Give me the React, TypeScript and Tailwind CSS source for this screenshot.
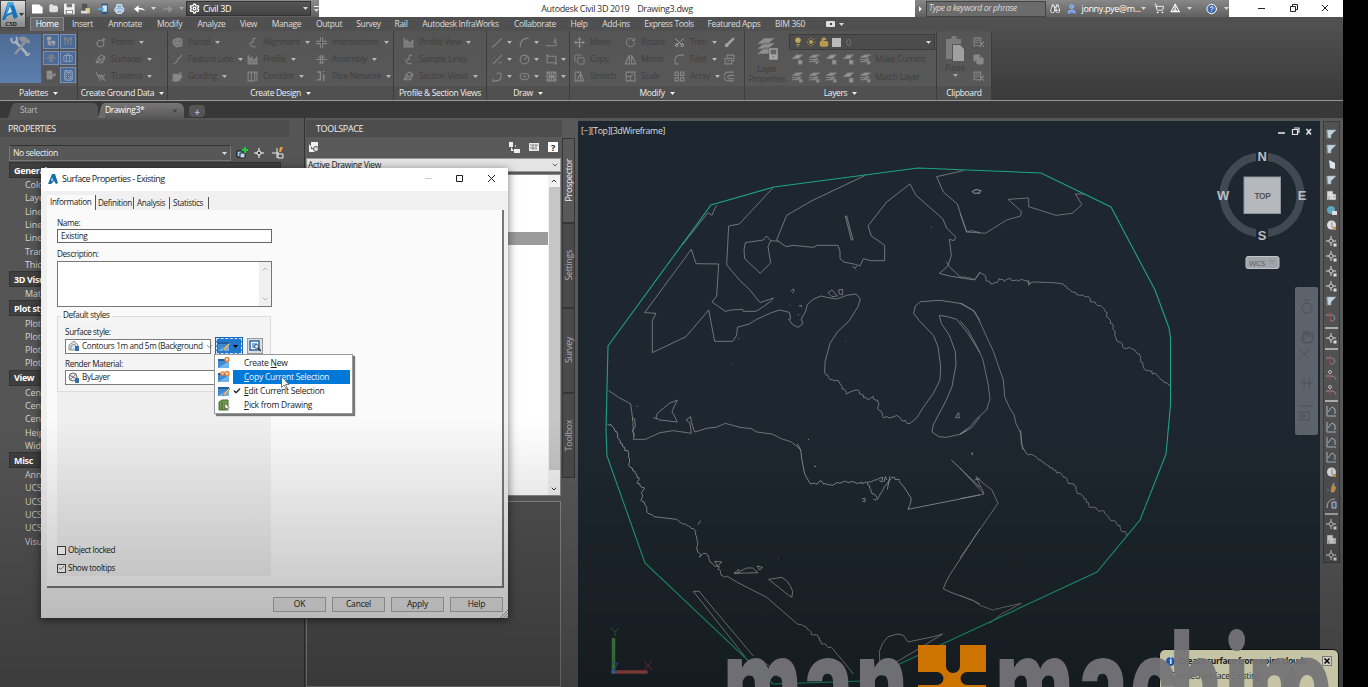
import React from "react";
import {
  Settings, Printer, Save, FolderOpen, File, User, ShoppingCart, Binoculars, CircleHelp, Lightbulb, Sun, LockOpen,
  Move, RotateCw, Scissors, Copy, Brush, Calculator, Briefcase, Check, ChevronDown, ChevronUp, Hand,
} from "lucide-react";

const Caret = ({ c = "fill-[#d8d8d8]" }: { c?: string }) => (
  <svg className={"h-[3px] w-[5px] shrink-0 " + c} viewBox="0 0 5 3"><path d="M0 0h5L2.5 3z" /></svg>
);

const tabs: [string, string][] = [
  ["Insert", "w-[37px]"], ["Annotate", "w-[48px]"], ["Modify", "w-[41px]"], ["Analyze", "w-[43px]"], ["View", "w-[31px]"],
  ["Manage", "w-[45px]"], ["Output", "w-[40px]"], ["Survey", "w-[39px]"], ["Rail", "w-[26px]"], ["Autodesk InfraWorks", "w-[93px]"],
  ["Collaborate", "w-[56px]"], ["Help", "w-[32px]"], ["Add-ins", "w-[42px]"], ["Express Tools", "w-[64px]"],
  ["Featured Apps", "w-[66px]"], ["BIM 360", "w-[46px]"],
];

const glyphs: Record<string, React.ReactNode> = {
  points: <><circle cx="5" cy="6" r="3" /><path d="M8 1v3M6.500 2.500h3M1 6h1" /></>,
  surf: <path d="M1 8 3 3l3-2 3 2-2 5zM3 3l4 5M1 8l8-5" />,
  trav: <path d="M1 1l3 6 2-3 3 5M5 9l4-6M2 4h4" />,
  parcel: <path d="M1 3l4-2 4 1v6l-5 1-3-3zM5 1v5M1 6h7" fill="#777" />,
  feature: <path d="M1 9c3-1 4-2 4-4M5 5l4-4M1 2h1" />,
  grading: <path d="M1 3h6l2 2-3 4H1zM7 1l2 2" fill="#888" />,
  align: <path d="M8 1c-5 0 0 4-4 4-2 0-2 4 4 4" />,
  profile: <path d="M1 1v8h8V3L6 6 4 3 3 6z" fill="#777" />,
  corridor: <path d="M1 1h6v8H1zM4 1v8M7 3l2-2v8" />,
  inter: <path d="M4 0v4H0M6 0v4h4M0 6h4v4M10 6H6v4" />,
  assembly: <path d="M0 5h10M2 3h6M4 1v8M6 1v8M3 8h4" />,
  pipe: <path d="M1 1h3v7H1M7 3v6M7 0v1" strokeWidth="1.4" />,
  line: <path d="M1 9 9 1M0 8v1h1" />,
  arc: <path d="M1 9C1 4 4 1 9 1M1 9h.5" />,
  pline: <path d="M0 8h8c2 0 2-4-1-3l2-2M8 1l1 2-2 1" />,
  ray: <path d="M1 9 9 1M2 3h.5M6 8h3" />,
  circle: <><circle cx="5" cy="5" r="4" /><path d="M5 5l3-3" /></>,
  rect: <path d="M1 2h8v6H1zM0 1h2M8 9h2" />,
  spline: <path d="M1 9h3c4 0 5-4 4-7H4M1 7v3" />,
  ellipse: <><ellipse cx="5" cy="5" rx="4" ry="3" /><circle cx="5" cy="5" r=".5" /></>,
  hatch: <path d="M1 1h8v8H1zM1 5h8M5 1v8M1 1l8 8M9 1 1 9M3 1v8M7 1v8" />,
  mirror: <path d="M4 1v8H0zM6 1v8h4z" />,
  scale: <path d="M1 1h8v8H1zM1 5h4v4M5 5l2-2" />,
  stretch: <path d="M1 1h5v8H1zM3 8 6 2l3 7H3" />,
  fillet: <path d="M1 9V5c0-2 2-4 4-4h4M1 9h3" />,
  array: <path d="M1 1h3v3H1zM6 1h3v3H6zM1 6h3v3H1zM6 6h3v3H6z" />,
  offset: <path d="M9 1H4a4 4 0 0 0 0 8h5M9 4H5a1 1 0 0 0 0 3h4" />,
  cube: <path d="M1 4h6v5H1zM3 3V1h6v5H7M3 6h2" />,
  layer: <path d="M1 4 4 1h5L6 4zM6 6h3v3H6zM7 5v1" fill="#999" />,
  layers2: <path d="M1 3 4 1h5L6 3zM0 5h5l3-1M0 7h5l3-2M6 8l1 1 2-3" fill="#999" />,
  layers3: <path d="M1 3 4 1h5L6 3zM0 5h5l3-1M0 7h5l3-2M7 7h2v2H7z" fill="#999" />,
  tree: <path d="M1 1h4v3H1zM2 4v5h7M5 5h4v4H5zM3 7h2" fill="#a9b5c7" />,
  pens: <path d="M2 1v8M5 3v6M8 1v8M1 1l1 3 2-3M4 2l1 3 2-3M7 1l1 3 1-3" />,
  sheet: <path d="M1 1h5v8H1zM1 4h5M1 6h5M3 1v8M6 6l3-3v3z" fill="#999" />,
  cut: <path d="M1 1h6v7H1zM2 3h4M2 5h3M6 4l4 5M10 4 6 9" />,
};
const G = ({ n, s = "size-[11px]" }: { n: string; s?: string }) => (
  <svg viewBox="0 0 10 10" className={s + " shrink-0 fill-none stroke-[#858585]"} strokeWidth="1">{glyphs[n]}</svg>
);

const Cmd = ({ n, icon, label, caret }: { n?: string; icon?: React.ReactNode; label: string; caret?: boolean }) => (
  <div className="flex h-[17px] items-center gap-[5px] whitespace-nowrap text-[#404040]">
    {n ? <G n={n} /> : icon}
    <span className="text-[8.500px]">{label}</span>
    {caret && <Caret c="fill-[#b8b8b8]" />}
  </div>
);

const Panel = ({ label, w, caret, children }: { label: string; w: string; caret?: boolean; children: React.ReactNode }) => (
  <section className={"flex h-full shrink-0 flex-col border-r border-[#3d3d3d] bg-gradient-to-b from-[#555] to-[#595959] " + w}>
    <div className="flex h-[55px] pt-[3px]">{children}</div>
    <div className="flex h-[14px] items-center justify-center gap-[5px] bg-[#505050] text-[8.500px] whitespace-nowrap text-[#efefef]">
      {label}{caret && <Caret c="fill-[#eee]" />}
    </div>
  </section>
);

const Ribbon = () => (
  <div className="flex h-[70px] border-b border-[#999] bg-gradient-to-b from-[#4e4e4e] to-[#3a3a3a]">
    <Panel label="Palettes" w="w-[78px]" caret>
      <div className="flex h-[49px] w-[41px] items-start justify-center bg-gradient-to-b from-[#4d6b94] to-[#5c7fae] pt-[2px]">
        <svg viewBox="0 0 22 20" className="h-[20px] w-[22px] fill-none stroke-[#a9b0b8]">
          <path d="M5 5 17 18" strokeWidth="2.600" /><path d="M2 2c-2 3 1 6 4 4 2-1 1-4 0-5" strokeWidth="2" /><path d="M16 18c0 2 4 1 3-1" strokeWidth="2" />
          <path d="M15 6 5 18" strokeWidth="2.600" stroke="#8f949a" /><path d="M9 2c4-2 8-1 11 4l-2 1-3-2-3 1z" fill="#8f949a" stroke="#8f949a" />
        </svg>
      </div>
      <div className="ml-[2px] grid h-[49px] grid-cols-2 gap-x-px gap-y-[2px]">
        {["tree", "pens", "assembly", "x", "sheet", "y"].map((n, i) => (
          <div key={i} className={"flex w-[16px] items-center justify-center " + (i === 4 ? "bg-[#555]" : "border border-[#7890b4] bg-[#4c6a97]")}>
            {n === "x" ? <Briefcase className="size-[10px] text-[#98a6bb]" /> : n === "y" ? <Calculator className="size-[11px] text-[#a8b6ca]" /> : <G n={n} s="size-[10px]" />}
          </div>
        ))}
      </div>
    </Panel>
    <Panel label="Create Ground Data" w="w-[90px]" caret>
      <div className="pl-[17px]"><Cmd n="points" label="Points" caret /><Cmd n="surf" label="Surfaces" caret /><Cmd n="trav" label="Traverse" caret /></div>
    </Panel>
    <Panel label="Create Design" w="w-[226px]" caret>
      <div className="w-[79px] pl-[4px]"><Cmd n="parcel" label="Parcel" caret /><Cmd n="feature" label="Feature Line" caret /><Cmd n="grading" label="Grading" caret /></div>
      <div className="w-[69px]"><Cmd n="align" label="Alignment" caret /><Cmd n="profile" label="Profile" caret /><Cmd n="corridor" label="Corridor" caret /></div>
      <div><Cmd n="inter" label="Intersections" caret /><Cmd n="assembly" label="Assembly" caret /><Cmd n="pipe" label="Pipe Network" caret /></div>
    </Panel>
    <Panel label="Profile & Section Views" w="w-[93px]">
      <div className="pl-[9px]"><Cmd n="profile" label="Profile View" caret /><Cmd n="align" label="Sample Lines" /><Cmd n="surf" label="Section Views" caret /></div>
    </Panel>
    <Panel label="Draw" w="w-[83px]" caret>
      <div className="grid h-[51px] grid-cols-3 gap-x-[7px] pl-[5px]">
        {["line", "arc", "pline", "ray", "circle", "rect", "spline", "ellipse", "hatch"].map((n, i) => (
          <div key={n} className="flex items-center gap-[4px]"><G n={n} />{i !== 2 && <Caret c="fill-[#b8b8b8]" />}</div>
        ))}
      </div>
    </Panel>
    <Panel label="Modify" w="w-[175px]" caret>
      <div className="w-[51px] pl-[4px]">
        <Cmd icon={<Move className="size-[11px] text-[#999]" />} label="Move" /><Cmd icon={<Copy className="size-[11px] text-[#888]" />} label="Copy" /><Cmd n="stretch" label="Stretch" />
      </div>
      <div className="w-[49px] pl-[4px]">
        <Cmd icon={<RotateCw className="size-[11px] text-[#888]" />} label="Rotate" /><Cmd n="mirror" label="Mirror" /><Cmd n="scale" label="Scale" />
      </div>
      <div className="w-[54px] pl-[4px]">
        <Cmd icon={<Scissors className="size-[11px] -rotate-90 text-[#aaa]" />} label="Trim" caret /><Cmd n="fillet" label="Fillet" caret /><Cmd n="array" label="Array" caret />
      </div>
      <div className="flex h-[51px] flex-col justify-around"><Brush className="size-[11px] fill-[#aaa] text-[#999]" /><G n="cube" /><G n="offset" /></div>
    </Panel>
    <Panel label="Layers" w="w-[192px]" caret>
      <div className="flex w-[44px] flex-col items-center pt-[2px] text-[8.500px] leading-[10px] text-[#404040]">
        <svg viewBox="0 0 24 24" className="mb-[4px] size-[24px] fill-[#8f8f8f] stroke-[#5a5a5a]" strokeWidth=".6">
          <path d="M2 18 9 12h11l-7 6zM2 13l7-6h11l-7 6zM2 8l7-6h11l-7 6z" /><path d="M14 12h9v12h-9z" fill="#a5a5a5" /><path d="M16 14h5v4h-5zM17 21h3" fill="#666" />
        </svg>
        <span>Layer</span><span>Properties</span>
      </div>
      <div>
        <div className="flex h-[16px] w-[146px] items-center gap-[3px] border border-[#3c3c3c] bg-[#4c4c4c] pl-[3px]">
          <Lightbulb className="size-[10px] fill-[#c0aa60] text-[#b9a45c]" /><Sun className="size-[10px] fill-[#b19b50] text-[#b19b50]" />
          <LockOpen className="size-[10px] fill-[#b8974e] text-[#c7a45a]" /><span className="size-[9px] bg-[#bbb]" />
          <span className="ml-[2px] text-[9px] text-[#777]">0</span><span className="mr-[3px] ml-auto"><Caret /></span>
        </div>
        {["Make Current", "Match Layer"].map((t, i) => (
          <div key={t} className="flex h-[18px] items-center gap-[6px] pl-[3px] text-[8.500px] text-[#404040]">
            {["layer", "layers2", "layer", "layer", "layers3"].map((k, j) => <G key={j} n={i && j !== 3 ? "layers3" : k} />)}<span className="-ml-[2px] whitespace-nowrap">{t}</span>
          </div>
        ))}
      </div>
    </Panel>
    <Panel label="Clipboard" w="w-[55px]">
      <div className="flex w-[36px] flex-col items-center pt-[2px] text-[8.500px] text-[#404040]">
        <svg viewBox="0 0 19 25" className="h-[25px] w-[19px]"><path d="M0 3h5l1-3h4l1 3h4v5H6v15H0z" fill="#7c7c7c" /><path d="M7 9h7l4 4v12H7z" fill="#a0a0a0" /></svg>
        <span className="leading-[13px]">Paste</span><Caret c="fill-[#aaa]" />
      </div>
      <div className="flex h-[51px] flex-col justify-around"><G n="cut" /><Copy className="size-[11px] fill-[#888] text-[#888]" /><G n="cut" /></div>
    </Panel>
  </div>
);

const TitleBar = () => (
  <header className="flex h-[17px] shrink-0 items-center bg-white">
    <div className="flex h-full w-[319px] items-center gap-[6px] bg-gradient-to-b from-[#8d8d8d] to-[#5f5f5f] pl-[32px]">
      <svg viewBox="0 0 12 10" className="h-[10px] w-[12px] fill-white"><path d="M0 0h8l4 3v7H0z" /></svg>
      <FolderOpen className="size-[11px] fill-[#ddd] text-[#eee]" />
      <svg viewBox="0 0 12 12" className="size-[12px]"><path d="M0 0h12v12H0z" fill="#eee" /><path d="M3 0h6v4H3zM2 7h8v5H2z" fill="#777" /><path d="M3 8h6v3H3z" fill="#fff" /></svg>
      <svg viewBox="0 0 12 12" className="size-[12px]"><path d="M1 0h6v9H1z" fill="#555" /><path d="M5 5h5v6H5z" fill="#d9cf8e" /><path d="M0 8h7v3H0z" fill="#ddd" /></svg>
      <svg viewBox="0 0 12 12" className="size-[12px]"><path d="M4 0h7v12H4z" fill="#335a7c" /><path d="M5 2h5v7H5z" fill="#cfe6f8" /><path d="M0 5h4V3l3 3-3 3V7H0z" fill="#58a6dd" /></svg>
      <Printer className="size-[12px] fill-[#8bb4d4] text-[#e6f2ff]" />
      <svg viewBox="0 0 12 8" className="ml-[3px] h-[8px] w-[11px] shrink-0 fill-white"><path d="M0 4 5 0v2.500c4 0 6 1 7 3.500-2-1-4-1.500-7-1.500V8z" /></svg><Caret />
      <svg viewBox="0 0 12 8" className="h-[8px] w-[11px] shrink-0 fill-[#929292]"><path d="M12 4 7 0v2.500C3 2.500 1 3.500 0 6c2-1 4-1.500 7-1.500V8z" /></svg>
      <Caret c="fill-[#aaa]" />
      <div className="-ml-[4px] flex h-[15px] w-[125px] shrink-0 items-center gap-[3px] border border-[#333] bg-gradient-to-b from-[#555] to-[#434343] px-[2px] text-[9px] text-white">
        <Settings className="size-[11px]" strokeWidth={3} />Civil 3D<span className="ml-auto"><Caret /></span>
      </div>
      <span className="-ml-[3px] flex flex-col gap-[2px]"><i className="h-px w-[5px] bg-white" /><Caret /></span>
    </div>
    <div className="flex w-[596px] justify-center text-[9px] whitespace-pre text-[#333]">Autodesk Civil 3D 2019    Drawing3.dwg</div>
    <div className="flex h-full w-[314px] items-center bg-gradient-to-b from-[#888] to-[#606060]">
      <svg viewBox="0 0 3 6" className="mx-[4px] h-[6px] w-[3px] fill-white"><path d="M0 0l3 3-3 3z" /></svg>
      <div className="flex h-[16px] w-[126px] items-center border border-[#444] bg-[#6b6b6b] pl-[2px] text-[8.500px] text-[#ddd] italic">Type a keyword or phrase</div>
      <Binoculars className="mx-[4px] size-[11px] fill-[#555] text-white" />
      <User className="mr-[4px] ml-[2px] size-[12px] fill-[#6f97e8] text-[#a3c0ff]" />
      <span className="w-[60px] text-[9px] whitespace-nowrap text-white">jonny.pye@m...</span>
      <Caret /><ShoppingCart className="ml-[8px] size-[11px] text-white" />
      <svg viewBox="0 0 10 10" className="mx-[6px] size-[11px] fill-none stroke-white"><path d="M5 1 1 8h8zM5 3v3M3 8l2-2 2 2" /></svg>
      <Caret /><CircleHelp className="mr-[7px] ml-[14px] size-[12px] fill-[#456bb5] text-white" /><Caret />
    </div>
    <svg viewBox="0 0 114 17" className="h-[17px] w-[114px] fill-none stroke-[#222]">
      <path d="M29 8.500h7M61.500 6.500h5v5h-5zM63.500 6.500v-2h5v5h-2M93 5l6 6M99 5l-6 6" />
    </svg>
  </header>
);

const props: [string, string[]][] = [
  ["General", ["Color", "Layer", "Linetype", "Linetype scale", "Lineweight", "Transparency", "Thickness"]],
  ["3D Visualization", ["Material"]],
  ["Plot style", ["Plot style", "Plot style table", "Plot table", "Plot table type"]],
  ["View", ["Center X", "Center Y", "Center Z", "Height", "Width"]],
  ["Misc", ["Annotation", "UCS icon", "UCS icon", "UCS per", "UCS Name", "Visual Style"]],
];

const Properties = () => (
  <aside className="flex w-[305px] shrink-0 flex-col border-r border-[#333] bg-[#555]">
    <div className="mt-[2px] flex h-[17px] w-[289px] items-center bg-[#4d4d4d] pl-[8px] text-[9px] text-[#eee]">PROPERTIES</div>
    <div className="mt-[8px] flex h-[16px] items-center gap-[5px] pl-[9px]">
      <div className="flex h-[16px] w-[222px] items-center justify-between border border-[#777] border-t-[#333] bg-[#575757] px-[3px] text-[8.500px] text-[#eee]">No selection<Caret /></div>
      <svg viewBox="0 0 12 12" className="size-[12px]"><path d="M1 4h6v6H1z" fill="#9cc6ef" stroke="#111" /><path d="M4 6h5v5H4z" fill="#bfd9f5" stroke="#222" /><path d="M9 0v6M6 3h6" stroke="#1fd03c" strokeWidth="2" /></svg>
      <svg viewBox="0 0 12 12" className="size-[12px] fill-[#333] stroke-white"><path d="M6 1v10M1 6h10" /><circle cx="6" cy="6" r="2" /></svg>
      <svg viewBox="0 0 12 12" className="ml-[2px] size-[12px]"><path d="M5 1v10M0 6h7M6 7h5v4H6z" stroke="#eee" fill="#555" /><path d="M8 0h3L9 5H7z" fill="#f0982e" /></svg>
    </div>
    <div className="mt-px ml-[9px] w-[272px]">
      {props.map(([h, rows]) => (
        <div key={h}>
          <div className="flex h-[16px] items-center border border-[#333] bg-[#3f3f3f] pl-[4px] text-[9px] font-bold text-white">{h}</div>
          {rows.map((r, i) => <div key={i} className="flex h-[13.300px] items-center pl-[16px] text-[9px] tracking-[-0.1px] text-[#d5d5d5]">{r}</div>)}
        </div>
      ))}
    </div>
  </aside>
);

const Toolspace = () => (
  <aside className="flex w-[273px] shrink-0 bg-[#595959]">
    <div className="flex w-[257px] flex-col pl-px">
      <div className="mt-[2px] flex h-[17px] items-center bg-[#4d4d4d] pl-[10px] text-[9px] text-[#eee]">TOOLSPACE</div>
      <div className="flex h-[21px] items-center gap-[9px] pr-[4px] pb-px pl-[3px]">
        <svg viewBox="0 0 10 10" className="mr-auto size-[10px]"><path d="M2 0h7v7H2zM0 2v8h7" fill="#eee" /><circle cx="7" cy="7" r="2.500" fill="#ddd" stroke="#555" /></svg>
        <svg viewBox="0 0 11 11" className="size-[11px] fill-[#eee]"><path d="M0 0h4v5H0zM2 5v4h3M5 7h6v4H5zM6 3h1v3" /></svg>
        <svg viewBox="0 0 10 10" className="size-[10px]"><path d="M0 1h10v8H0z" fill="#e8e8e8" /><path d="M1 3h8M4 3v5M7 3v5M1 6h5" stroke="#888" /></svg>
        <span className="flex size-[10px] items-center justify-center bg-white text-[9px] font-bold text-[#222]">?</span>
      </div>
      <div className="flex h-[14px] w-[255px] items-center justify-between border border-[#999] bg-[#e4e4e4] px-px text-[8.500px] text-[#222]">Active Drawing View<ChevronDown className="size-[8px]" /></div>
      <div className="mt-[2px] flex h-[322px] w-[255px] flex-col border border-[#888] bg-white">
        <div className="flex h-full">
          <div className="flex-1 pt-[57px]"><div className="h-[13px] bg-[#9b9b9b]" /></div>
          <div className="flex w-[12px] flex-col items-center justify-between bg-[#f1f1f1] py-[2px]">
            <ChevronUp className="size-[8px] text-[#333]" strokeWidth={3} /><div className="mt-[2px] h-[283px] w-[11px] bg-[#c6c6c6]" /><ChevronDown className="mt-auto size-[8px] text-[#333]" strokeWidth={3} />
          </div>
        </div>
      </div>
      <div className="mt-[5px] w-[255px] flex-1 border border-[#888] bg-[#515151]" />
    </div>
    <nav className="flex w-[14px] flex-col pt-[20px]">
      {["Prospector", "Settings", "Survey", "Toolbox"].map((t, i) => (
        <div key={t} className={"flex h-[85px] w-[13px] items-center justify-center border border-[#353535] text-[9px] [writing-mode:vertical-rl] " + (i ? "bg-[#4a4a4a] text-[#aaa]" : "bg-[#595959] text-[#eee]")}>
          <span className="rotate-180">{t}</span>
        </div>
      ))}
    </nav>
  </aside>
);

// A leading "~" marks a contour that is drawn with small irregular steps.
const contoursA = [
  "580,112 478,222 446,228 440,345 480,392 508,418 540,458 580,444 572,454 550,470 528,484 490,484 488,478 452,480 436,484 416,470 396,456 410,438 416,342 348,341 334,298 194,488 228,490 217,512 217,608 318,560 386,480 404,574 458,574 470,556 472,532 508,522 530,508 574,488 600,480 628,487 632,506 626,508 638,524 654,532 668,522 664,506 676,486 682,464 700,448 722,438 740,442 770,447 800,436 828,432 841,447 834,470 808,512 772,546 750,580 735,636 734,668",
  "~734,668 750,688 778,696 786,716 800,732 820,722 838,724 850,742 864,748 880,740 894,758 896,780 908,800 930,804 950,796 964,810 990,820",
  "990,820 1010,804 1030,772 1060,730 1080,690 1082,650 1074,590 1060,556 1018,512 1001,490 1006,468 1022,455 1080,451 1146,461 1180,482 1200,512",
  "856,76 694,153 620,196 590,270 618,290 640,286 700,292 712,286 774,286 780,304 780,326 792,336 826,343 840,348 850,326 872,332 914,332 914,286 906,280 874,258 864,228 920,156 990,102 1008,136 1088,206 1100,234 1128,262 1122,272 1108,268 1114,316 1104,348 1078,370 1108,378 1184,390 1200,368",
  "496,278 550,270 560,258 572,272 564,290 572,338 541,370 494,326 492,300 496,278", "572,272 596,274",
  "796,198 800,198 819,270 814,270 796,198", "818,348 825,356 830,348",
  "384,188 396,196 404,176 412,166", "384,188 306,286",
  "1150,62 1070,80 1090,126 1132,162 1160,246 1174,242 1200,248",
  "1176,125 1190,119 1200,122 1200,130 1184,130 1176,125",
  "744,428 756,420 772,438 756,440 744,428", "776,420 788,418 788,434 778,432 776,420", "632,424 640,417 643,424 636,430",
  "656,468 664,466 664,472", "630,464 632,466", "654,492 656,496", "1200,608 1162,548 1130,508 1102,500 1078,496 1084,520 1108,556 1126,604 1128,644 1116,710 1096,756 1060,824 1056,846 1076,860 1100,862 1144,852 1176,832 1200,800",
  "1126,802 1136,788 1138,804 1126,802", "86,722 116,742 152,762 158,806", "~158,806 160,868", "160,868 196,868 240,848 280,842 334,850 330,820 318,810 332,800 334,816 344,846 384,834 408,832 436,820 480,832 514,836 530,846 576,852 604,866 634,876 652,890 662,900",
  "292,750 268,760 232,790 228,802 238,810 292,816 276,784 292,750", "220,802 232,808", "156,806 164,806 166,830 158,840 162,860",
  "796,574 798,574", "474,566 478,566", "455,640 457,640", "684,867 686,868", "1053,231 1056,233", "170,768 174,770",
];
const contoursB = [
  "0,190 20,246 76,250 140,210 182,198 184,184 144,148 206,144 206,170 288,196 336,190 366,164 346,132 372,132",
  "36,124 48,118 64,122 58,128 42,130 36,124", "-42,334 -30,352 0,380",
  "~0,380 44,388 60,366 72,374 78,392 92,402 112,398 116,386 132,394 150,384 162,392 188,388 204,398 220,396",
  "220,396 280,398 310,402", "~310,402 322,416 350,434 380,440 398,456 434,480 444,502 460,528 466,560 488,590 520,598 538,612 542,636 562,662 590,674 610,692 630,706",
  "0,460 44,484 68,534 100,604 130,690 134,740 148,772 162,794 168,820 182,850 188,900",
  "0,512 24,540 46,580 68,626 84,700 90,746 80,780 50,806 30,830 0,852", "206,390 206,406 214,398",
];
const contoursC = [
  "~82,72 96,78 112,102 112,112 128,140 146,158 146,196 158,212 178,234 172,250 186,262 194,264 184,280 186,304 198,318 204,340 222,350", "222,350 290,358 302,368",
  "~302,368 320,376 344,390 350,420 352,456 362,462 358,472 370,460 382,466 390,486 400,494 418,500 414,508 422,518 434,532 444,530",
  "444,530 470,546 560,592 650,670", "~650,670 680,682 694,704 714,706 718,722 730,732 764,754", "764,754 788,782 820,822",
  "404,484 426,486 412,498 404,484", "354,374 362,362", "462,520 476,508 478,518 462,520 534,518 518,504 500,504 480,514", "532,498 548,502 538,510 532,498",
  "566,538 606,532 622,544 632,560 638,574 636,592 626,586 566,538",
  "662,150 666,180 674,222 690,250", "~690,250 712,252 720,242 730,252 756,256 776,248 800,246 830,250 862,248 880,242 900,234", "652,132 662,150", "~862,248 874,276 892,298 912,262 936,232 960,240",
  "900,234 908,232 906,246 898,242", "912,246 916,230 920,240", "930,228 922,268", "880,298 890,300",
  "956,242 974,264 994,296 990,314 984,328 1200,285", "846,298 854,294 856,304 848,304", "1114,180 1200,262", "1174,160 1178,162", "702,198 708,200", "684,117 686,119", "595,475 596,477",
  "340,574 358,574 380,602 520,768", "340,574 495,770",
  "560,790 590,826 612,836 614,850", "900,800 898,754 908,730 924,710 954,702 970,706 980,720 984,726 1060,710 1088,702 1020,744 960,780 906,806 906,796",
  "1200,386 1110,524 1098,546 1090,566 1110,576 1180,602 1200,612", "1184,240 1200,236",
];
const contoursD = [
  "0,114 72,192 0,206", "72,190 48,140 72,162 96,180 114,220 0,384", "0,496 40,512 60,526 98,540 130,532 184,520 128,550 88,580",
  "182,0 184,44 200,72", "~200,72 220,76 246,96 280,120 304,132 322,154 344,168 350,184 370,200 386,226 412,240 426,242 446,262 470,280 500,316", "36,66 38,76", "0,12 20,0",
];

const roughen = (s: string) => {
  if (s[0] !== "~") return s;
  const pts = s.slice(1).split(" ").map((p) => p.split(",").map(Number));
  const out: string[] = [];
  let k = 1;
  for (let i = 0; i < pts.length - 1; i++) {
    const [x, y] = pts[i], [u, v] = pts[i + 1];
    const n = Math.max(1, Math.round(Math.hypot(u - x, v - y) / 6));
    for (let j = 0; j < n; j++) {
      k = (k * 73 + 41) % 997;
      const d = j ? ((k % 7) - 3) * 0.9 : 0;
      out.push(`${x + ((u - x) * j) / n + d},${y + ((v - y) * j) / n - d}`);
    }
  }
  out.push(pts[pts.length - 1].join(","));
  return out.join(" ");
};

const Lines = ({ items, at, c }: { items: string[]; at: string; c: string }) => (
  <g transform={at + " scale(.33333)"} fill="none" strokeWidth="2.200" className={c}>
    {items.map((p, i) => <polyline key={i} points={roughen(p)} />)}
  </g>
);

const Drawing = () => (
  <svg viewBox="578 121 742 566" className="h-[566px] w-[742px] bg-[#1e272f]" fontFamily="Open Sans, sans-serif">
    <text x="581" y="134" fontSize="8.500" fill="#ddd" textLength="84" lengthAdjust="spacingAndGlyphs">[−][Top][3dWireframe]</text>
    <Lines items={contoursA} at="translate(580 150)" c="stroke-[#8d9196]" />
    <Lines items={contoursB} at="translate(960 150)" c="stroke-[#858a8f]" />
    <Lines items={contoursC} at="translate(580 400)" c="stroke-[#a6abaf]" />
    <Lines items={contoursD} at="translate(960 430)" c="stroke-[#8a8f94]" />
    <path d="M608 346 711 205 774 187 918 168 1041 173 1111 207 1155 290 1169 328 1170.500 338V405L1166 454 1140 520 1097 572 863 681 773 684 645 563 607 456 606 430z" fill="none" stroke="#1fa384" strokeWidth="1.100" />
    <g stroke="#dfe3e6" fill="none" strokeWidth="1.600"><path d="M1278 133h7" /><path d="M1292.500 129.500h5v5h-5zM1294 128h5v5" strokeWidth="1.200" /><path d="M1306.500 129l4.500 5.500M1311 129l-4.500 5.500" /></g>
    <circle cx="1262" cy="195" r="38.500" fill="none" stroke="#414952" strokeWidth="8" />
    <g fontFamily="Liberation Sans, sans-serif" fontWeight="bold" fontSize="13" fill="#b9bec4" textAnchor="middle">
      <path d="M1256 150h12v12h-12zM1256 229h12v12h-12z" fill="#1e272f" />
      <text x="1262" y="161">N</text><text x="1262" y="240">S</text><text x="1223" y="200">W</text><text x="1302" y="200">E</text>
      <rect x="1244" y="177" width="36.500" height="36.500" fill="#b5b9be" stroke="#8e949a" />
      <text x="1262.500" y="198.500" fontSize="9" fill="#4f555b" textLength="16" lengthAdjust="spacingAndGlyphs">TOP</text>
    </g>
    <rect x="1246" y="256.500" width="33" height="12" rx="2" fill="#9fa5aa" stroke="#c0c5c9" />
    <text x="1249" y="265.500" fontSize="8" fill="#555d64">WCS</text><path d="M1269 260.500h6l-3 3z" fill="none" stroke="#8b9197" />
    <rect x="1295" y="287" width="23" height="148" rx="2" fill="#5c636a" />
    <g fill="none" stroke="#4b5259"><circle cx="1307" cy="308" r="5" /><path d="M1304 300h6M1299 349l10 10M1299 359l11-10M1300 383h13M1304 377v12M1309 377v12M1299 412h10v8h-10zM1299 406h14M1302 414l4 2-4 2z" /></g>
    <Hand x="1300" y="330" width="14" height="14" color="#4b5259" />
    <g strokeWidth="3.500"><path d="M613.500 638v34" stroke="#4d8a47" /><path d="M613 672h34.500" stroke="#a84e4e" /></g>
    <path d="M611 628l4 4 4-4M615 632v4" stroke="#2f6b2f" fill="none" /><path d="M644 661l8 9M652 661l-8 9" stroke="#8c3438" /><path d="M612 663h6l-5 8h5" stroke="#2c64a8" fill="none" /><circle cx="613" cy="672" r="2" fill="#3d7fc0" />
  </svg>
);

const railKinds = "flag flag page flag doc globe ball pt pt pt pt flag arc | pt | arc arc2 arc2 | dim dim dim dim ball bolt curve | pt doc pt".split(" ");
const railArt: Record<string, React.ReactNode> = {
  flag: <path d="M1 1h9L5 6v3H2zM1 1v9" fill="#c6d2e0" stroke="#8aa" strokeWidth=".6" />,
  page: <path d="M3 1l6 3v6L4 9z" fill="#dfe6ee" />,
  doc: <path d="M1 1h6v3h3v6H1zM3 6v4M7 7h2" fill="#ddd" stroke="#666" strokeWidth=".5" />,
  globe: <><circle cx="5" cy="5" r="4" fill="#5aa9bb" /><path d="M6 6h5v4H6z" fill="#ddd" /></>,
  ball: <><circle cx="5.500" cy="5" r="4.500" fill="#ddd" /><path d="M6 2v6" stroke="#888" /><path d="M7 7h3v3H7z" fill="#d98a33" /></>,
  pt: <><path d="M5 0v3M5 7v3M0 5h3M7 5h3" stroke="#ddd" /><path d="M7.500 7.500h3v3h-3z" fill="#ddd" /><circle cx="5" cy="5" r="2" fill="none" stroke="#ccc" /></>,
  arc: <><path d="M0 3h5c5 0 5 6 0 6" fill="none" stroke="#8494a5" /><path d="M4 0v10" stroke="#c33f3f" /></>,
  arc2: <><path d="M0 6h5c5 0 5 4 5 4" fill="none" stroke="#8494a5" /><circle cx="4" cy="2" r="1.500" fill="none" stroke="#bbb" /><path d="M4 4v6" stroke="#c33f3f" /></>,
  dim: <path d="M1 0v10h9M2 6l4-5 3 2v5" fill="none" stroke="#9fb4cc" />,
  bolt: <path d="M6 4l2-3v4h2l-2 5H5zM1 8h2" fill="#d98f35" stroke="#bba" strokeWidth=".5" />,
  curve: <><path d="M1 10C1 4 4 1 9 1" fill="none" stroke="#bbb" /><path d="M6 4h4v6H6z" fill="#46658f" stroke="#ccd" /></>,
};
const Rail = () => (
  <aside className="flex w-[23px] flex-col bg-[#595959] pt-[3px] pl-[3px]">
    <div className="flex h-[442px] w-[17px] flex-col items-center justify-between border border-[#3b3b3b] bg-[#515151] pt-[7px] pb-[1px]">
      {railKinds.map((k, i) => k === "|" ? <i key={i} className="h-[2px] w-[13px] bg-[#aaa]" /> : <svg key={i} viewBox="0 0 11 11" className="size-[11px] shrink-0">{railArt[k]}</svg>)}
    </div>
  </aside>
);

const Combo = ({ t, w, globe }: { t: string; w: string; globe?: boolean }) => (
  <div className={"flex h-[15px] items-center gap-[2px] border border-[#7a7a7a] bg-white px-[2px] " + w}>
    <svg viewBox="0 0 12 12" className="size-[12px] shrink-0">
      {globe ? <><circle cx="5" cy="5" r="4" fill="#e8ecef" stroke="#666" /><path d="M1 3l8 4M2 8l6-6" stroke="#777" /></> : <><path d="M1 10V5l5-4 4 4v5z" fill="#dde3e8" stroke="#8a9198" /><path d="M3 10V6l3-2 2 2" fill="none" stroke="#8a9198" /></>}
      <path d="M7 6h4v5H7z" fill="#356fa8" />
    </svg>
    <span className="whitespace-nowrap">{t}</span><ChevronDown className="ml-auto size-[9px] shrink-0 text-[#555]" />
  </div>
);

const EditArt = ({ v }: { v: number }) => (
  <svg viewBox="0 0 12 12" className="size-[12px] shrink-0">
    {v === 3 ? <><path d="M1 3l3-2h6v8l-2 2H1z" fill="#6f9a50" stroke="#48682f" /><path d="M4 3v8" stroke="#48682f" /><path d="M7 4v6l1.500-1 1 3 1-1-1-2h2z" fill="#fff" stroke="#333" strokeWidth=".5" /></> : <>
      <path d="M0 2h11v9H0z" fill="#3f8ad2" /><path d="M0 2h11v2H0z" fill="#1f5ea6" /><path d="M0 11 11 4v7z" fill="#73b1ea" />
      {v === 2 ? <path d="M5 11l1-3 5-5 1 1-5 6z" fill="#f2d08a" stroke="#7c5a22" strokeWidth=".5" /> : <><circle cx="9" cy="2.500" r="2" fill="#fbe3c4" stroke="#ee7d2b" strokeWidth="1.300" /></>}
      {v === 1 && <circle cx="4.500" cy="2.500" r="1.700" fill="#fbe3c4" stroke="#ee7d2b" strokeWidth="1.300" />}
    </>}
  </svg>
);

const Dialog = () => (
  <div className="absolute top-[168px] left-[41px] flex h-[450px] w-[467px] flex-col bg-[#f0f0f0] text-[8.200px] tracking-[-0.35px] text-[#222] shadow-[0_2px_9px_rgba(0,0,0,0.55)]">
    <div className="flex h-[23px] shrink-0 items-center bg-white pb-[2px] pl-[7px] text-[9px] tracking-[-0.5px]">
      <svg viewBox="0 0 10 10" className="mr-[4px] size-[10px]"><path d="M0 10 4 0h3l3 9-2 1-2-3-3 3z" fill="#1b6ea5" /><path d="M4 3l1.500 4L3 7z" fill="#a8d4ee" /></svg>
      Surface Properties - Existing
      <svg viewBox="0 0 80 12" className="mr-[3px] ml-auto h-[12px] w-[80px] fill-none stroke-[#222]"><path d="M0 5.500h7" stroke="#ccc" /><path d="M31.500 2.500h6v6h-6zM63 2l7 7M70 2l-7 7" /></svg>
    </div>
    <div className="mt-[4px] flex h-[15px] shrink-0 items-center pl-[6px] whitespace-nowrap">
      <span className="h-[15px] w-[49px] border-r border-[#555] bg-[#fafafa] pl-[3px] leading-[14px]">Information</span>
      <span className="h-[12px] w-[38px] border-r border-[#555] pl-[2px] leading-[12px]">Definition</span>
      <span className="h-[12px] w-[36px] border-r border-[#555] pl-[3px] leading-[12px]">Analysis</span>
      <span className="h-[12px] w-[39px] border-r border-[#555] pl-[3px] leading-[12px]">Statistics</span>
    </div>
    <div className="ml-[6px] flex h-[378px] w-[457px] shrink-0 flex-col border-r-2 border-b-2 border-[#777] bg-[#fafafa] pl-[10px]">
      <div className="mt-[7px] h-[12px] leading-[12px]">Name:</div>
      <div className="flex h-[14px] w-[215px] items-center border border-[#666] bg-white pl-[3px]">Existing</div>
      <div className="mt-[4px] h-[14px] leading-[13px]">Description:</div>
      <div className="flex h-[46px] w-[215px] flex-col items-end justify-between border border-[#777] bg-white">
        <div className="flex h-full w-[12px] flex-col items-center justify-between bg-[#f0f0f0] py-[3px] text-[#999]"><ChevronUp className="size-[8px]" /><ChevronDown className="size-[8px]" /></div>
      </div>
      <div className="relative mt-[9px] h-[76px] w-[214px] shrink-0 border border-[#dcdcdc] bg-[#f4f4f4] pt-[9px] pl-[7px]">
        <span className="absolute -top-[8px] left-[3px] bg-[#f8f8f8] px-[2px] leading-[12px]">Default styles</span>
        <div className="h-[12px] leading-[12px]">Surface style:</div>
        <div className="flex h-[16px] items-center">
          <Combo t="Contours 1m and 5m (Background" w="w-[146px]" />
          <div className="ml-[5px] flex h-[16px] w-[26px] items-center justify-between border border-dashed border-[#cfe4fa] bg-[#2377cc] pr-[3px] pl-px outline outline-[#0f67c2]"><EditArt v={2} /><Caret c="fill-black" /></div>
          <div className="ml-[5px] flex size-[16px] items-center justify-center border border-[#999] bg-[#ddd]">
            <svg viewBox="0 0 12 12" className="size-[12px]"><path d="M1 1h9v9H1z" fill="#fff" stroke="#2569ab" strokeWidth="1.500" /><path d="M3 3h5v5H3z" fill="#79afdf" /><circle cx="7.500" cy="6.500" r="2" fill="#def" stroke="#333" strokeWidth=".8" /><path d="M9 8l3 3" stroke="#333" strokeWidth="1.400" /></svg>
          </div>
        </div>
        <div className="mt-[4px] h-[12px] leading-[12px]">Render Material:</div>
        <Combo t="ByLayer" w="w-[198px]" globe />
      </div>
      <div className="flex h-[184px] w-[214px] shrink-0 flex-col justify-end gap-[6px] bg-[#efefef] pb-[2px]">
        <div className="flex h-[12px] items-center gap-[2px]"><i className="size-[9px] border border-[#444] bg-white" />Object locked</div>
        <div className="flex h-[12px] items-center gap-[2px]"><i className="flex size-[9px] items-center border border-[#444] bg-white"><Check className="size-[8px]" /></i>Show tooltips</div>
      </div>
    </div>
    <div className="mt-[9px] flex justify-end gap-[6px] pr-[5px] text-[8.500px] tracking-[-0.2px]">
      {["OK", "Cancel", "Apply", "Help"].map((b) => <div key={b} className="flex h-[15px] w-[53px] items-center justify-center border border-[#aaa] bg-[#e5e5e5]">{b}</div>)}
    </div>
    <svg viewBox="0 0 8 8" className="absolute right-0 bottom-0 size-[8px] stroke-[#999]"><path d="M0 8l8-8M3 8l5-5M6 8l2-2" /></svg>
  </div>
);

const Menu = () => (
  <div className="absolute top-[354px] left-[214px] h-[60px] w-[139px] border border-[#999] bg-white py-[1px] text-[8.500px] tracking-[-0.25px] text-[#222] shadow-[2px_2px_1px_#777]">
    {[["Create ", "N", "ew"], ["", "C", "opy Current Selection"], ["", "E", "dit Current Selection"], ["", "P", "ick from Drawing"]].map(([a, u, b], i) => (
      <div key={i} className="flex h-[14px] items-center pl-[3px]">
        <EditArt v={i} />
        <div className={"ml-[3px] flex h-[14px] w-[117px] items-center " + (i === 1 ? "bg-[#0078d7] text-[#eaf4ff]" : "")}>
          <span className="w-[11px]">{i === 2 && <Check className="size-[8px]" strokeWidth={4} />}</span>
          <span className="whitespace-pre">{a}<u>{u}</u>{b}</span>
        </div>
      </div>
    ))}
    <svg viewBox="0 0 9 14" className="absolute top-[21px] left-[66px] h-[14px] w-[9px]"><path d="M.5.500v11l2.500-2.500 2 4 1.500-.5-2-4H8z" fill="#fff" stroke="#444" strokeWidth=".7" /></svg>
  </div>
);

const Notice = () => (
  <div className="absolute top-[649px] left-[1159px] h-[45px] w-[180px] rounded-t-[6px] border border-[#111] bg-[#c5c5a6] text-[8.500px] text-[#222]">
    <div className="flex h-[22px] items-center gap-[4px] pr-[6px] pl-[6px] font-bold">
      <i className="flex h-[9px] w-[9px] shrink-0 items-center justify-center rounded-full bg-[#2450a8] text-[8px] text-white not-italic">i</i>
      <span className="whitespace-nowrap">Create surface from point clouds</span>
      <span className="ml-auto flex size-[10px] shrink-0 items-center justify-center border border-[#777] bg-[#d2d2c4]">
        <svg viewBox="0 0 6 6" className="size-[6px] stroke-black" strokeWidth="1.500"><path d="M.5.500l5 5M5.500.500l-5 5" /></svg>
      </span>
    </div>
    <div className="pl-[10px] tracking-[-0.2px]">Created surface Existing</div>
  </div>
);

const Watermark = () => (
  <svg viewBox="720 615 648 72" className="absolute top-[615px] left-[720px] h-[72px] w-[648px]" fontFamily="Roboto, sans-serif" fontWeight="900" fontSize="138" fill="#757477" fillOpacity=".94">
    <g transform="scale(.66 1)">
      <text x="1096 1218 1297" y="732">man</text>
      <text x="1508 1635 1712 1773 1855 1892 1941" y="732">machine</text>
    </g>
    <path d="M918 645h28v21a7 7 0 0 0 14 0v-21h26v27h-19a6.500 6.500 0 0 0 0 13h19v2h-68v-2h19a6.500 6.500 0 0 0 0-13h-19z" fill="#cc7300" fillOpacity="1" />
  </svg>
);

export default function App() {
  return (
    <div className="relative h-[687px] w-[1368px] overflow-hidden bg-black font-['Open_Sans',sans-serif] leading-none tracking-[-0.35px]">
      <main className="flex h-[687px] w-[1343px] flex-col bg-[#555]">
        <TitleBar />
        <div className="flex h-[14px] shrink-0 items-center bg-[#505050] pl-[30px] text-[8.500px] whitespace-nowrap text-[#ddd]">
          <span className="flex h-[14px] w-[34px] items-center justify-center border border-b-0 border-[#888] bg-[#6a6a6a] text-white">Home</span>
          {tabs.map(([t, w]) => <span key={t} className={"flex shrink-0 justify-center " + w}>{t}</span>)}
          <span className="ml-[13px] flex h-[6px] w-[9px] items-center justify-center rounded-[1px] bg-[#ddd]"><i className="size-[2px] bg-[#444]" /></span><span className="ml-[4px]"><Caret /></span>
        </div>
        <Ribbon />
        <div className="flex h-[17px] shrink-0 items-end bg-[#383838] pl-[7px] text-[8.500px]">
          <svg viewBox="0 0 9 15" className="h-[15px] w-[9px] shrink-0 fill-[#555]"><path d="M0 15C4 13 3 0 9 0v15z" /></svg>
          <div className="flex h-[15px] w-[82px] items-center rounded-tr-[5px] bg-[#555] pl-[4px] text-[#bbb]">Start</div>
          <svg viewBox="0 0 8 15" className="-ml-px h-[15px] w-[8px] shrink-0 fill-[#6c6c6c]"><path d="M0 15C4 13 2 0 8 0v15z" /></svg>
          <div className="flex h-[15px] w-[79px] items-center justify-between rounded-tr-[6px] bg-gradient-to-b from-[#777] to-[#595959] pr-[7px] text-white">Drawing3*<span className="text-[9px] text-[#333]">×</span></div>
          <div className="mb-px ml-[5px] flex h-[12px] w-[16px] items-center justify-center rounded-[4px] bg-[#555] text-[11px] text-[#ddd]">+</div>
        </div>
        <div className="flex min-h-0 flex-1">
          <Properties />
          <Toolspace />
          <div className="w-[742px] shrink-0 pt-[3px]"><Drawing /></div>
          <Rail />
        </div>
      </main>
      <div className="absolute top-0 left-0 flex h-[28px] w-[26px] flex-col items-center border border-[#444] bg-gradient-to-b from-[#ddd] to-[#888]">
        <svg viewBox="0 0 24 20" className="h-[20px] w-[24px]"><path d="M1 19 7 1h5l5 15-4 2-2-5-5 2-2 4z" fill="#1674b8" /><path d="M9 5l2 6-5 2z" fill="#cfe3f1" /><path d="M7 1h5l1 4-4-1-5 12z" fill="#48a4df" /><path d="M18 12h5l-2.500 3z" fill="#333" /></svg>
        <b className="-ml-[4px] text-[6px] leading-[6px] tracking-normal text-[#222]">C3D</b>
      </div>
      <Dialog />
      <Menu />
      <div className="absolute top-[420px] left-0 h-[267px] w-[1368px] bg-gradient-to-b from-transparent to-black/30" />
      <Notice />
      <Watermark />
    </div>
  );
}
